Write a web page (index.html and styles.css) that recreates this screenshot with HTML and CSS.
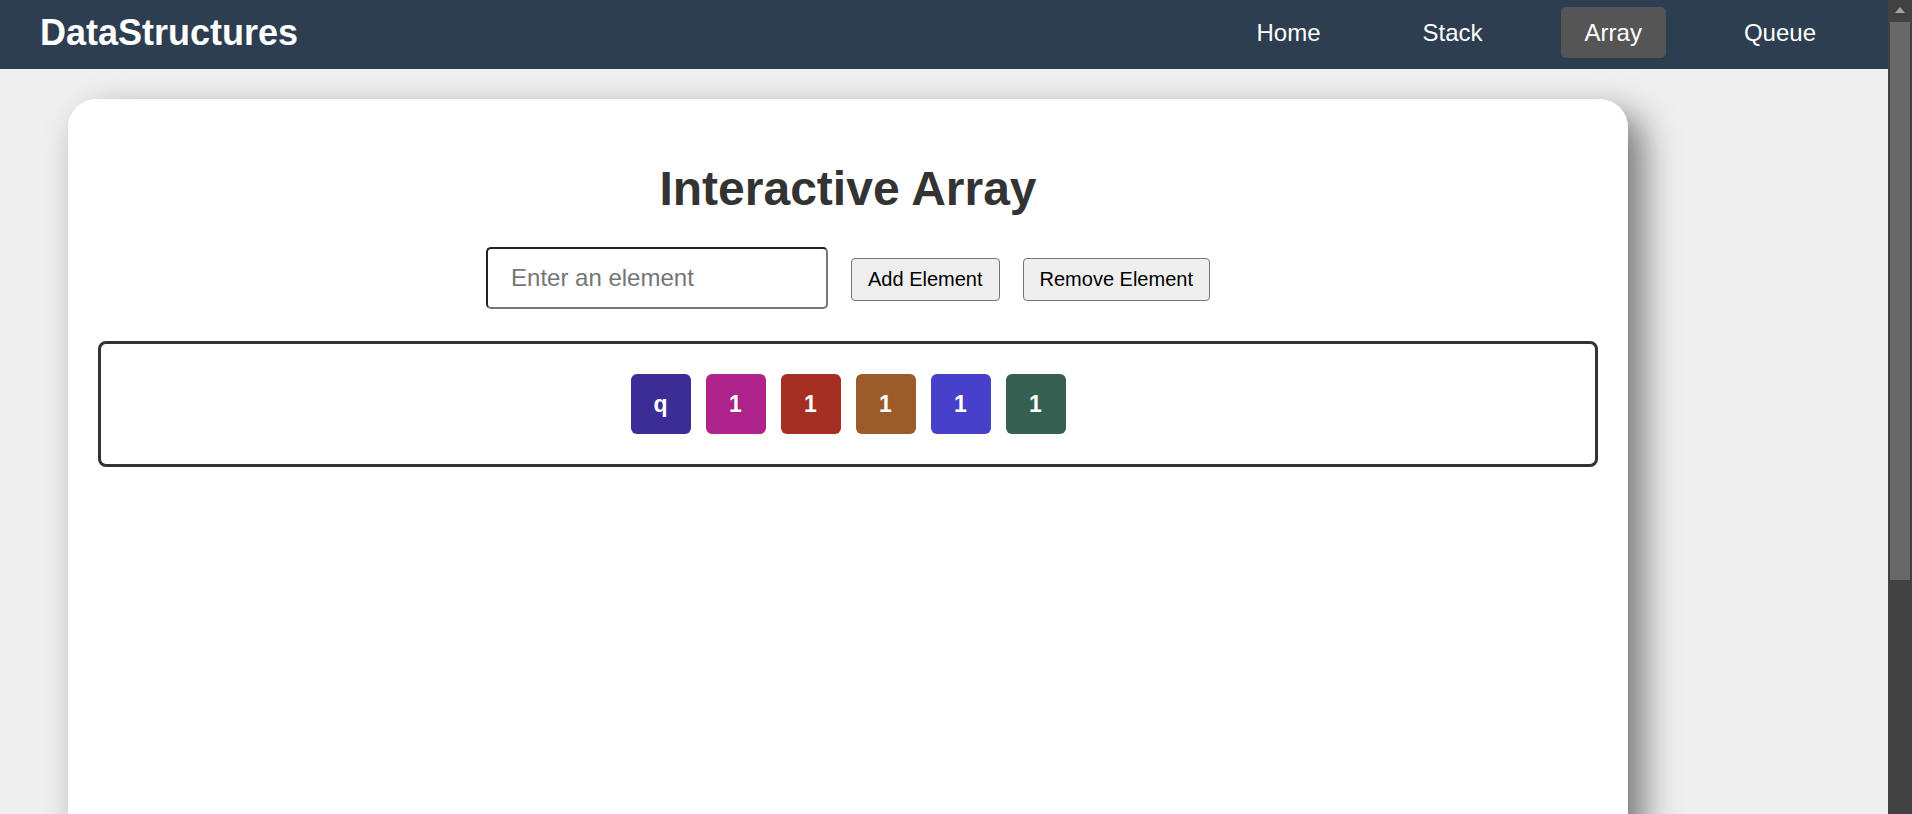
FILE: index.html
```html
<!DOCTYPE html>
<html lang="en">
<head>
<meta charset="utf-8">
<title>Interactive Array</title>
<link rel="stylesheet" href="styles.css">
</head>
<body>
<div class="window">
  <div class="viewport">
    <nav class="navbar">
      <div class="logo">DataStructures</div>
      <ul class="links">
        <li><a href="#">Home</a></li>
        <li><a href="#">Stack</a></li>
        <li><a href="#" class="active">Array</a></li>
        <li><a href="#">Queue</a></li>
      </ul>
    </nav>
    <main class="card">
      <h1 class="title">Interactive Array</h1>
      <div class="controls">
        <input class="field" type="text" placeholder="Enter an element">
        <button class="btn">Add Element</button>
        <button class="btn">Remove Element</button>
      </div>
      <div class="array-box">
        <div class="item" style="background:#3b2d95">q</div>
        <div class="item" style="background:#ae228b">1</div>
        <div class="item" style="background:#a52f22">1</div>
        <div class="item" style="background:#9c5b2b">1</div>
        <div class="item" style="background:#4741c9">1</div>
        <div class="item" style="background:#345f51">1</div>
      </div>
    </main>
  </div>
  <div class="scrollbar">
    <div class="arrow"></div>
    <div class="thumb"></div>
  </div>
</div>
</body>
</html>
```

FILE: styles.css
```css
html, body {
  margin: 0;
  height: 100%;
  overflow: hidden;
}

body {
  font-family: "Liberation Sans", Arial, sans-serif;
  background: #efefef;
}

.window {
  display: flex;
  height: 100vh;
}

.viewport {
  flex: 1;
  min-width: 0;
  overflow: hidden;
}

.navbar {
  display: flex;
  align-items: center;
  justify-content: space-between;
  height: 69px;
  box-sizing: border-box;
  padding: 7px 48px 11px 40px;
  background: #2c3e50;
  color: #fff;
}

.logo {
  font-size: 36px;
  font-weight: bold;
  line-height: 41px;
}

.links {
  display: flex;
  gap: 54px;
  list-style: none;
  margin: 0;
  padding: 0;
}

.links a {
  display: block;
  color: #fff;
  text-decoration: none;
  font-size: 24px;
  line-height: 27px;
  padding: 12px 24px;
  border-radius: 5px;
}

.links a.active {
  background: #555555;
}

.card {
  display: flex;
  flex-direction: column;
  width: 1560px;
  min-height: 900px;
  box-sizing: border-box;
  margin: 30px 0 0 68px;
  padding: 30px;
  background: #fff;
  border-radius: 28px;
  box-shadow: 15px 15px 35px rgba(0, 0, 0, 0.5);
}

.title {
  margin: 32px 0 31px;
  font-size: 48px;
  line-height: 55px;
  font-weight: bold;
  text-align: center;
  color: #333;
}

.controls {
  display: flex;
  justify-content: center;
  align-items: baseline;
  gap: 23px;
}

.field {
  box-sizing: border-box;
  width: 342px;
  padding: 15px 23px;
  font-family: "Liberation Sans", Arial, sans-serif;
  font-size: 24px;
  line-height: 28px;
  border: 2px solid;
  border-color: #222 #767676 #767676 #222;
  border-radius: 5px;
  background: #fff;
  color: #000;
  outline: none;
}

.field::placeholder {
  color: #757575;
}

.btn {
  font-family: "Liberation Sans", Arial, sans-serif;
  font-size: 20px;
  line-height: 23px;
  padding: 9px 16px;
  border: 1px solid #767676;
  border-radius: 4px;
  background: #efefef;
  color: #000;
}

.array-box {
  display: flex;
  justify-content: center;
  gap: 15px;
  margin-top: 32px;
  padding: 30px;
  border: 3px solid #333;
  border-radius: 8px;
}

.item {
  display: flex;
  align-items: center;
  justify-content: center;
  width: 60px;
  height: 60px;
  border-radius: 6px;
  color: #fff;
  font-size: 23px;
  font-weight: bold;
}

.scrollbar {
  display: flex;
  flex-direction: column;
  align-items: center;
  width: 24px;
  flex: none;
  background: #424242;
}

.arrow {
  width: 0;
  height: 0;
  margin-top: 7px;
  border-left: 5px solid transparent;
  border-right: 5px solid transparent;
  border-bottom: 6px solid #a3a3a3;
}

.thumb {
  width: 20px;
  height: 558px;
  margin-top: 9px;
  background: #686868;
}
```
